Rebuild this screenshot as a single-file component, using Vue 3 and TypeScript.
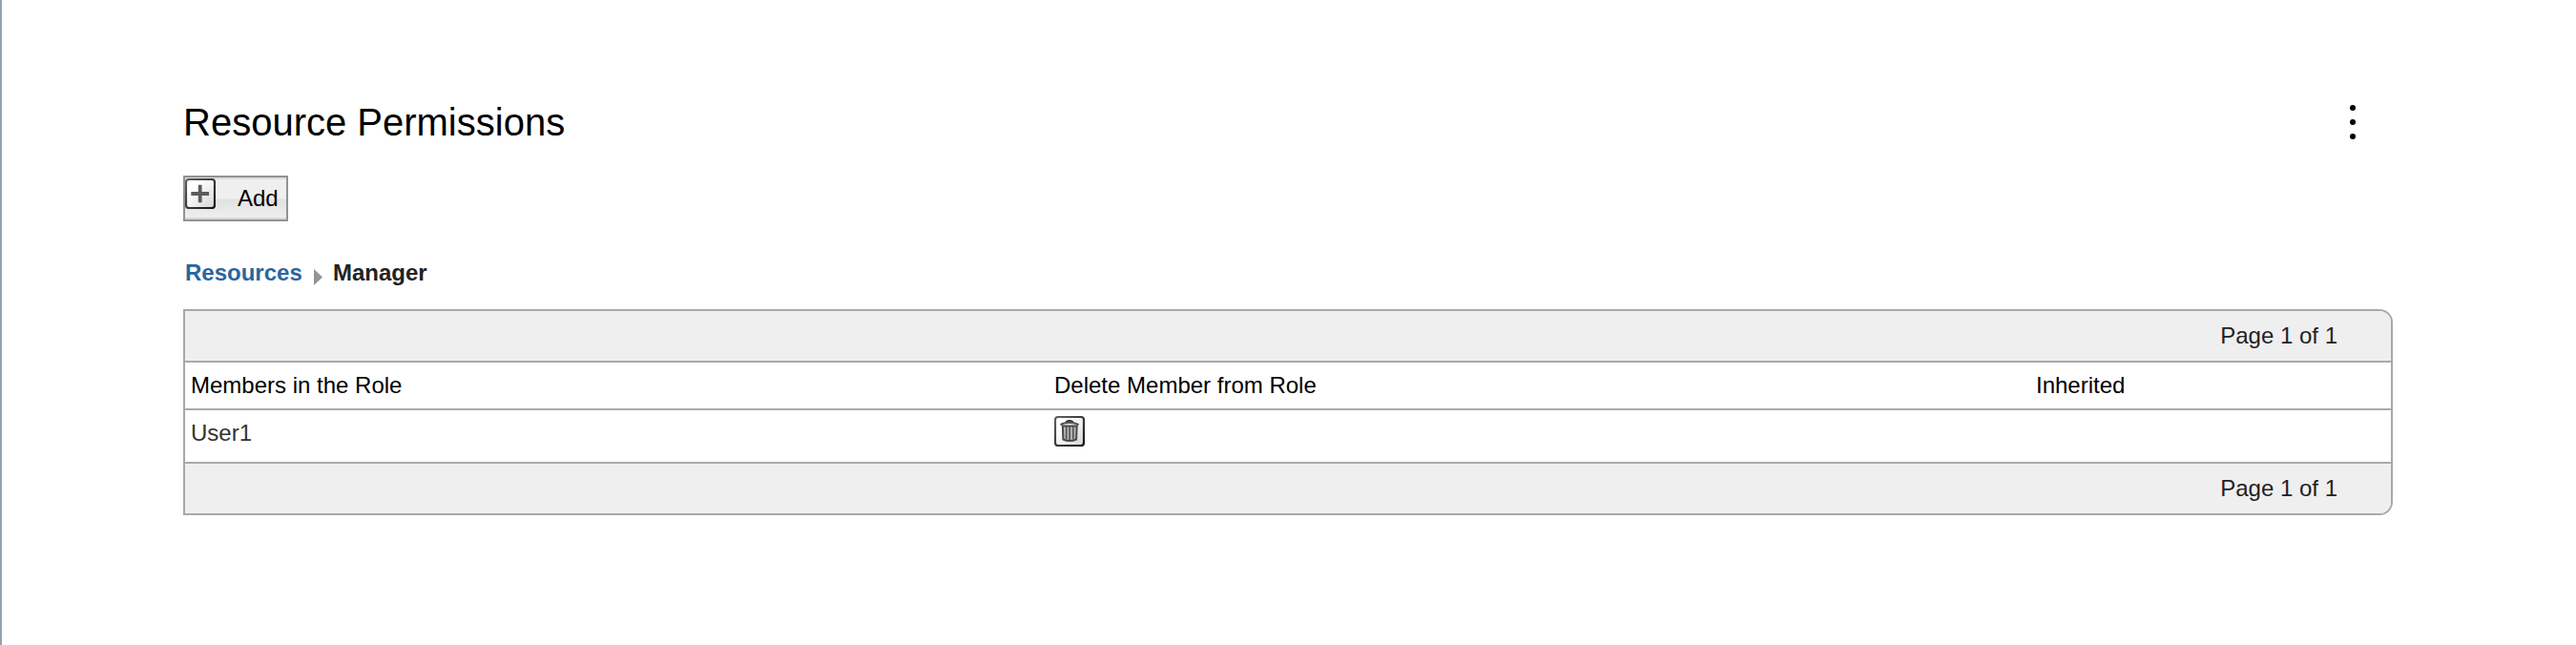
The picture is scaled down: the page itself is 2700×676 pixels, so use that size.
<script setup lang="ts">
interface Member {
  name: string
  inherited: string
}

const members: Member[] = [{ name: 'User1', inherited: '' }]
const pageLabel = 'Page 1 of 1'
</script>

<template>
  <main class="page">
    <header class="head">
      <h1>Resource Permissions</h1>
      <button class="menu" aria-label="More actions">
        <span class="dot"></span><span class="dot"></span><span class="dot"></span>
      </button>
    </header>

    <button class="add">
      <svg class="tile" viewBox="0 0 32 32" width="32" height="32">
        <defs>
          <linearGradient id="tileFill" x1="0" y1="0" x2="1" y2="1">
            <stop offset="0.3" stop-color="#fff" />
            <stop offset="1" stop-color="#d4d4d4" />
          </linearGradient>
          <linearGradient id="tileEdge" x1="0" y1="0" x2="1" y2="1">
            <stop offset="0" stop-color="#606060" />
            <stop offset="1" stop-color="#141414" />
          </linearGradient>
        </defs>
        <rect x="1" y="1" width="30" height="30" rx="3" fill="url(#tileFill)" stroke="url(#tileEdge)" stroke-width="2.200" />
        <path d="M15.700 6.800v18.400M6.300 16h18.800" stroke="#5c5c5c" stroke-width="3.800" />
      </svg>
      <span class="add-label">Add</span>
    </button>

    <nav class="crumbs">
      <a>Resources</a>
      <svg class="arrow" viewBox="0 0 9 17" width="9" height="17">
        <path d="M0 0L9 8.500L0 17z" fill="#949494" />
      </svg>
      <span>Manager</span>
    </nav>

    <section class="table">
      <div class="pager">{{ pageLabel }}</div>
      <div class="row columns">
        <span>Members in the Role</span>
        <span>Delete Member from Role</span>
        <span>Inherited</span>
      </div>
      <div v-for="m in members" :key="m.name" class="row member">
        <span>{{ m.name }}</span>
        <span>
          <svg class="trash" viewBox="0 0 32 32" width="32" height="32">
            <rect x="1" y="1" width="30" height="30" rx="3" fill="url(#tileFill)" stroke="url(#tileEdge)" stroke-width="2.200" />
            <path d="M12.500 7Q13 5 16 5Q19 5 19.500 7" fill="none" stroke="#333" stroke-width="2.200" />
            <path d="M6.500 9.200Q10 7 16 7Q22 7 25.500 9.200" fill="none" stroke="#555" stroke-width="2.200" />
            <path d="M8.800 10.500h14.900l-0.600 14q-6.800 3.200-13.700 0z" fill="#b8b8b8" stroke="#484848" stroke-width="2" />
            <path d="M12.700 11v13.500M16.200 11v14M19.800 11v13.500" stroke="#585858" stroke-width="1.700" />
          </svg>
        </span>
        <span>{{ m.inherited }}</span>
      </div>
      <div class="pager">{{ pageLabel }}</div>
    </section>
  </main>
</template>

<style>
body {
  margin: 0;
  background: #fff;
}
</style>

<style scoped>
.page {
  box-sizing: border-box;
  height: 676px;
  padding: 104px 192px 0 190px;
  border-left: 2px solid #93a1b1;
  background: #fff;
  font-family: "Liberation Sans", Arial, sans-serif;
  font-size: 24px;
  line-height: 28px;
  color: #222;
}
.head {
  display: flex;
  justify-content: space-between;
  height: 80px;
}
h1 {
  margin: 0;
  font-size: 40px;
  font-weight: 400;
  line-height: 48px;
  color: #000;
}
.menu {
  display: flex;
  flex-direction: column;
  align-items: center;
  gap: 9px;
  width: 6px;
  margin: 0 39px 0 0;
  padding: 6px 0 0;
  border: 0;
  background: none;
}
.dot {
  flex: none;
  width: 6px;
  height: 6px;
  border-radius: 50%;
  background: #000;
}
.add {
  box-sizing: border-box;
  display: flex;
  align-items: flex-start;
  width: 110px;
  height: 48px;
  padding: 0;
  border: 2px solid #929292;
  background: linear-gradient(#dcdcdc 0 2px, #efefef 2px 22px, #e1e1e1 23px, #efefef 42px, #d8d8d8 42px 44px);
  font: inherit;
  color: #000;
}
.tile {
  flex: none;
  margin-top: 1px;
  filter: blur(0.5px);
}
.add-label {
  margin: 8px 0 0 23px;
}
.crumbs {
  display: flex;
  height: 92px;
  padding: 40px 0 0 2px;
  box-sizing: border-box;
  font-weight: 700;
}
.crumbs a {
  width: 135px;
  color: #2a65a0;
}
.arrow {
  margin: 10px 11px 0 0;
}
.table {
  box-sizing: border-box;
  overflow: hidden;
  border: 2px solid #a9a9a9;
  border-radius: 0 14px 14px 0;
}
.pager {
  height: 52px;
  padding-right: 56px;
  background: #efefef;
  line-height: 52px;
  text-align: right;
}
.row {
  display: grid;
  grid-template-columns: 905px 1029px 1fr;
  padding-left: 6px;
}
.columns {
  height: 48px;
  border-top: 2px solid #a9a9a9;
  line-height: 48px;
  color: #000;
}
.member {
  height: 54px;
  border-top: 2px solid #a9a9a9;
  border-bottom: 2px solid #a9a9a9;
  line-height: 48px;
  color: #333;
}
.trash {
  display: block;
  margin-top: 6px;
  filter: blur(0.5px);
}
</style>
